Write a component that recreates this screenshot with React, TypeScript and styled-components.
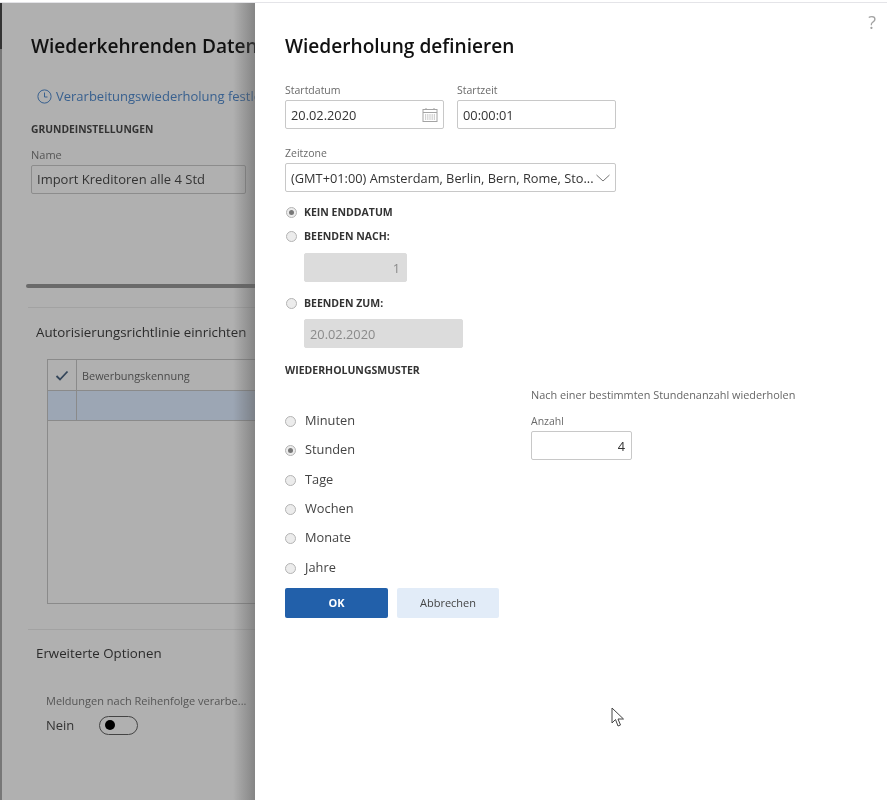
import React from "react";
import styled, { createGlobalStyle } from "styled-components";

const Global = createGlobalStyle`
  html, body { margin: 0; padding: 0; background: #fff; }
  body { font-family: "Open Sans", "Noto Sans", sans-serif; color: #333; }
  * { box-sizing: border-box; }
`;

const Page = styled.div`
  width: 887px;
  height: 800px;
  position: relative;
  overflow: hidden;
  display: flex;
  flex-direction: column;
  filter: blur(0.35px);
`;
const TopEdge = styled.div`
  height: 3px;
  flex: none;
  background: #fff;
  border-bottom: 1px solid #e4e4e8;
`;
const Main = styled.div`
  flex: 1;
  display: flex;
  min-height: 0;
`;

/* ---------- dimmed page behind the panel ---------- */
const Backdrop = styled.div`
  width: 255px;
  flex: none;
  position: relative;
  overflow: hidden;
  background: #b0b0b0;
  border-left: 2px solid #777;
  border-image: linear-gradient(to bottom, #333 47px, #777 47px) 1;
`;
const Shade = styled.div`
  position: absolute;
  top: 0;
  right: 0;
  bottom: 0;
  width: 22px;
  background: linear-gradient(to right, rgba(90, 90, 90, 0), rgba(90, 90, 90, 0.5));
`;
const BackInner = styled.div`
  width: 420px;
  display: flex;
  flex-direction: column;
`;
const BackTitle = styled.div`
  margin: 31px 0 0 29px;
  font-size: 19.1px;
  line-height: 24px;
  font-weight: 600;
  color: #111;
  white-space: nowrap;
`;
const BackLink = styled.div`
  margin: 28px 0 0 35px;
  height: 20px;
  display: flex;
  align-items: center;
  gap: 4px;
  font-size: 13px;
  color: #38608f;
  white-space: nowrap;
`;
const BackCaps = styled.div`
  margin: 16px 0 0 29px;
  font-size: 10.3px;
  line-height: 14px;
  font-weight: 700;
  color: #333;
  white-space: nowrap;
`;
const BackLabel = styled.div`
  margin: 12px 0 0 29px;
  font-size: 11px;
  line-height: 14px;
  color: #555;
`;
const BackInput = styled.div`
  margin: 3px 0 0 29px;
  width: 215px;
  height: 29px;
  border: 1px solid #8c8c8c;
  border-radius: 2px;
  padding-left: 5px;
  font-size: 13px;
  line-height: 27px;
  color: #333;
  white-space: nowrap;
`;
const Thick = styled.div`
  margin: 90px 0 0 24px;
  height: 4px;
  background: #6a6a6a;
  border-radius: 2px 0 0 2px;
`;
const Hair = styled.div<{ $top: number }>`
  margin: ${(p) => p.$top}px 0 0 26px;
  height: 1px;
  background: #a2a2a2;
`;
const Heading = styled.div<{ $top: number }>`
  margin: ${(p) => p.$top}px 0 0 34px;
  font-size: 13.3px;
  line-height: 20px;
  font-weight: 500;
  color: #2b2b2b;
  white-space: nowrap;
`;
const Table = styled.div`
  margin: 17px 0 0 45px;
  height: 245px;
  border: 1px solid #8a8a8a;
`;
const TRow = styled.div<{ $selected?: boolean; $h: number }>`
  height: ${(p) => p.$h}px;
  display: flex;
  background: ${(p) => (p.$selected ? "#9ca6b4" : "transparent")};
  border-bottom: 1px solid #8a8a8a;
`;
const CheckCell = styled.div`
  width: 29px;
  flex: none;
  display: flex;
  align-items: center;
  justify-content: center;
  border-right: 1px solid #8a8a8a;
`;
const HeadCell = styled.div`
  padding-left: 5px;
  font-size: 10.9px;
  line-height: 31px;
  color: #4a4a4a;
  white-space: nowrap;
`;
const BackField = styled.div`
  margin: 30px 0 0 44px;
  font-size: 11px;
  line-height: 16px;
  color: #555;
  white-space: nowrap;
`;
const ToggleRow = styled.div`
  margin: 5px 0 0 44px;
  display: flex;
  align-items: center;
  height: 22px;
  font-size: 13px;
  line-height: 24px;
  color: #333;
`;
const Toggle = styled.div`
  margin-left: 25px;
  width: 39px;
  height: 19px;
  border: 1px solid #444;
  border-radius: 10px;
  display: flex;
  align-items: center;
  padding-left: 5px;
`;
const Knob = styled.div`
  width: 10px;
  height: 10px;
  border-radius: 50%;
  background: #000;
`;

/* ---------- panel ---------- */
const Panel = styled.div`
  flex: 1;
  background: #fff;
  position: relative;
  padding-left: 30px;
  display: flex;
  flex-direction: column;
`;
const Help = styled.div`
  position: absolute;
  top: 8px;
  right: 11px;
  font-size: 18px;
  line-height: 22px;
  color: #a2a2a2;
`;
const Title = styled.h1`
  margin: 31px 0 0;
  font-size: 19.1px;
  line-height: 24px;
  font-weight: 600;
  color: #111;
`;
const Row = styled.div<{ $mt: number }>`
  display: flex;
  gap: 13px;
  margin-top: ${(p) => p.$mt}px;
`;
const Field = styled.div<{ $w: number }>`
  width: ${(p) => p.$w}px;
  display: flex;
  flex-direction: column;
`;
const Label = styled.div`
  font-size: 10.5px;
  line-height: 14px;
  color: #6a6a6a;
  margin-bottom: 3px;
  white-space: nowrap;
`;
const Input = styled.div<{ $right?: boolean; $disabled?: boolean; $w?: number; $ml?: number; $mt?: number }>`
  height: 29px;
  width: ${(p) => (p.$w ? `${p.$w}px` : "auto")};
  margin-left: ${(p) => p.$ml ?? 0}px;
  margin-top: ${(p) => p.$mt ?? 0}px;
  border: 1px solid ${(p) => (p.$disabled ? "#dcdcdc" : "#c8c8c8")};
  border-radius: 2px;
  background: ${(p) => (p.$disabled ? "#dcdcdc" : "#fff")};
  color: ${(p) => (p.$disabled ? "#8a8a8a" : "#333")};
  padding: 1px ${(p) => (p.$right ? 6 : 5)}px 0 5px;
  display: flex;
  align-items: center;
  justify-content: ${(p) => (p.$right ? "flex-end" : "space-between")};
  font-size: 12.8px;
  white-space: nowrap;
`;
const RadioRow = styled.div<{ $h: number; $mt?: number; $indent?: boolean }>`
  height: ${(p) => p.$h}px;
  margin-top: ${(p) => p.$mt ?? 0}px;
  padding-left: ${(p) => (p.$indent ? 1 : 0)}px;
  display: flex;
  align-items: center;
`;
const RadioDot = styled.span<{ $on?: boolean; $gap: number }>`
  width: 11px;
  height: 11px;
  flex: none;
  margin-right: ${(p) => p.$gap}px;
  border-radius: 50%;
  border: 1px solid #b4b4b4;
  background: #ececec;
  display: flex;
  align-items: center;
  justify-content: center;
  &::after {
    content: "";
    width: 5px;
    height: 5px;
    border-radius: 50%;
    background: ${(p) => (p.$on ? "#777" : "transparent")};
  }
`;
const CapsText = styled.span`
  font-size: 10.5px;
  font-weight: 700;
  color: #333;
  white-space: nowrap;
`;
const SectionCaps = styled.div`
  margin-top: 15px;
  font-size: 10.5px;
  line-height: 14px;
  font-weight: 700;
  color: #333;
`;
const Pattern = styled.div`
  display: flex;
  margin-top: 10px;
`;
const PatternList = styled.div`
  width: 246px;
  flex: none;
  padding-top: 20px;
  display: flex;
  flex-direction: column;
`;
const PatternText = styled.span`
  font-size: 12.8px;
  color: #444;
  margin-top: -3px;
`;
const Side = styled.div`
  display: flex;
  flex-direction: column;
  padding-top: 1px;
`;
const SideText = styled.div`
  font-size: 10.9px;
  line-height: 14px;
  color: #666;
  white-space: nowrap;
  margin-bottom: 12px;
`;
const Buttons = styled.div`
  display: flex;
  gap: 9px;
  margin-top: 5px;
`;
const Button = styled.button<{ $primary?: boolean; $w: number }>`
  width: ${(p) => p.$w}px;
  height: 30px;
  padding: 0;
  border: none;
  border-radius: 2px;
  background: ${(p) => (p.$primary ? "#2260aa" : "#e2ecf8")};
  color: ${(p) => (p.$primary ? "#fff" : "#444")};
  font-family: inherit;
  font-size: 11px;
  font-weight: ${(p) => (p.$primary ? 700 : 400)};
`;
const Cursor = styled.svg`
  position: absolute;
  left: 611px;
  top: 707px;
`;

const Clock = () => (
  <svg width="15" height="15" viewBox="0 0 15 15" fill="none" stroke="#38608f" strokeWidth="1">
    <circle cx="7.5" cy="7.5" r="6.6" />
    <path d="M7.5 3.5V8H10.5" />
  </svg>
);
const Check = () => (
  <svg width="14" height="11" viewBox="0 0 14 11" fill="none" stroke="#34465a" strokeWidth="1.8">
    <path d="M1.5 6L5 9.5L12.5 1.5" />
  </svg>
);
const Calendar = () => (
  <svg width="16" height="14" viewBox="0 0 16 14" fill="none" stroke="#a4a4a4" strokeWidth="1">
    <rect x="1" y="1.5" width="14" height="12" />
    <path d="M1 4.5H15M4 0V2M12 0V2" />
    <path d="M3 7H13M3 9H13M3 11H13" strokeDasharray="1.2 1" />
  </svg>
);
const Chevron = () => (
  <svg width="14" height="8" viewBox="0 0 14 8" fill="none" stroke="#666" strokeWidth="0.9">
    <path d="M0.5 1L7 7L13.5 1" />
  </svg>
);

const patterns = ["Minuten", "Stunden", "Tage", "Wochen", "Monate", "Jahre"];

export default function App() {
  return (
    <Page>
      <Global />
      <TopEdge />
      <Main>
        <Backdrop>
          <BackInner>
            <BackTitle>Wiederkehrenden Daten</BackTitle>
            <BackLink>
              <Clock />
              Verarbeitungswiederholung festle
            </BackLink>
            <BackCaps>GRUNDEINSTELLUNGEN</BackCaps>
            <BackLabel>Name</BackLabel>
            <BackInput>Import Kreditoren alle 4 Std</BackInput>
            <Thick />
            <Hair $top={19} />
            <Heading $top={14}>Autorisierungsrichtlinie einrichten</Heading>
            <Table>
              <TRow $h={31}>
                <CheckCell>
                  <Check />
                </CheckCell>
                <HeadCell>Bewerbungskennung</HeadCell>
              </TRow>
              <TRow $h={30} $selected>
                <CheckCell />
              </TRow>
            </Table>
            <Hair $top={25} />
            <Heading $top={13}>Erweiterte Optionen</Heading>
            <BackField>Meldungen nach Reihenfolge verarbe...</BackField>
            <ToggleRow>
              Nein
              <Toggle>
                <Knob />
              </Toggle>
            </ToggleRow>
          </BackInner>
          <Shade />
        </Backdrop>
        <Panel>
          <Help>?</Help>
          <Title>Wiederholung definieren</Title>
          <Row $mt={25}>
            <Field $w={159}>
              <Label>Startdatum</Label>
              <Input>
                20.02.2020
                <Calendar />
              </Input>
            </Field>
            <Field $w={159}>
              <Label>Startzeit</Label>
              <Input>00:00:01</Input>
            </Field>
          </Row>
          <Row $mt={17}>
            <Field $w={331}>
              <Label>Zeitzone</Label>
              <Input>
                (GMT+01:00) Amsterdam, Berlin, Bern, Rome, Sto...
                <Chevron />
              </Input>
            </Field>
          </Row>
          <RadioRow $h={24} $mt={8} $indent>
            <RadioDot $on $gap={7} />
            <CapsText>KEIN ENDDATUM</CapsText>
          </RadioRow>
          <RadioRow $h={24} $indent>
            <RadioDot $gap={7} />
            <CapsText>BEENDEN NACH:</CapsText>
          </RadioRow>
          <Input $right $disabled $w={103} $ml={19} $mt={5}>
            1
          </Input>
          <RadioRow $h={24} $mt={9} $indent>
            <RadioDot $gap={7} />
            <CapsText>BEENDEN ZUM:</CapsText>
          </RadioRow>
          <Input $disabled $w={159} $ml={19} $mt={4}>
            20.02.2020
          </Input>
          <SectionCaps>WIEDERHOLUNGSMUSTER</SectionCaps>
          <Pattern>
            <PatternList>
              {patterns.map((p) => (
                <RadioRow key={p} $h={29.3}>
                  <RadioDot $on={p === "Stunden"} $gap={9} />
                  <PatternText>{p}</PatternText>
                </RadioRow>
              ))}
            </PatternList>
            <Side>
              <SideText>Nach einer bestimmten Stundenanzahl wiederholen</SideText>
              <Field $w={101}>
                <Label>Anzahl</Label>
                <Input $right>4</Input>
              </Field>
            </Side>
          </Pattern>
          <Buttons>
            <Button $primary $w={103}>OK</Button>
            <Button $w={102}>Abbrechen</Button>
          </Buttons>
        </Panel>
      </Main>
      <Cursor width="14" height="22" viewBox="0 0 14 22" fill="#fff" stroke="#444" strokeWidth="1">
        <path d="M1 1V16L4.5 12.5L7 19L9.5 18L7 12H12.5Z" />
      </Cursor>
    </Page>
  );
}
